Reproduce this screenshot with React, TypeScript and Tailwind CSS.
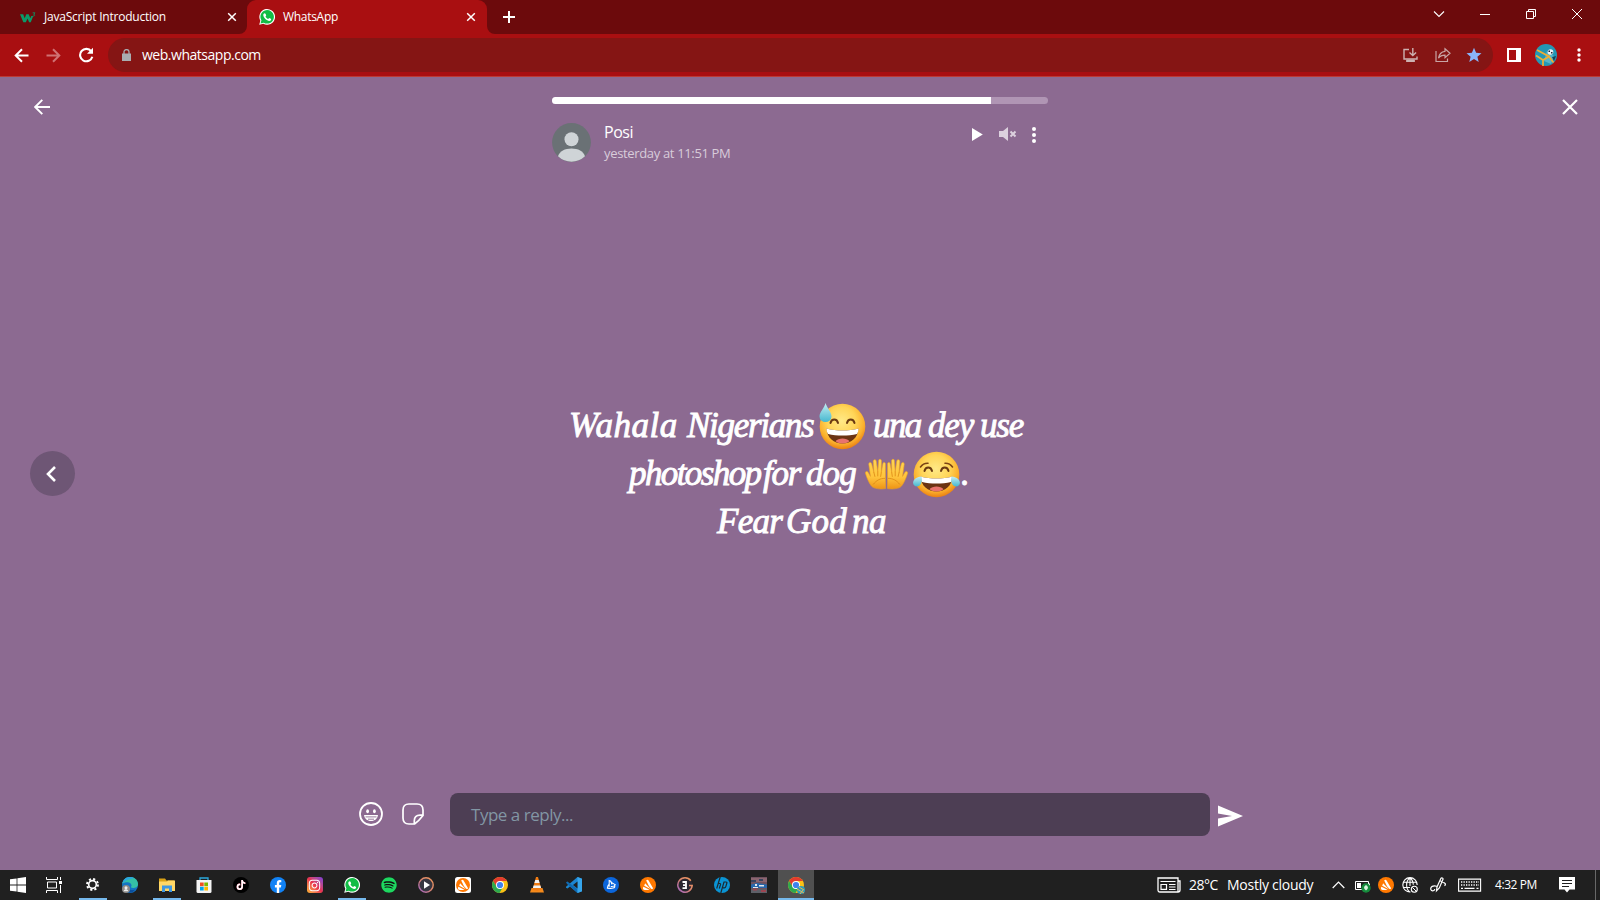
import React from "react";
import { FaInstagram, FaSpotify, FaTiktok } from "react-icons/fa";

type P = { children?: React.ReactNode; c?: string; v?: string };

function Svg({ children, c = "size-4", v = "0 0 16 16" }: P) {
  return (
    <svg viewBox={v} className={`block shrink-0 ${c}`} fill="none">
      {children}
    </svg>
  );
}

function WhatsBadge({ c = "size-4" }: P) {
  return (
    <Svg c={c} v="0 0 24 24">
      <path d="M.3 23.7 2 17.6A11.8 11.8 0 1 1 6.500 22.100Z" fill="#fff" />
      <path d="M2.300 21.700 3.600 17A10.100 10.100 0 1 1 7.200 20.500Z" fill="#12bd45" />
      <path
        d="M8.300 6.200c-.6 0-1.900 1.100-1.900 2.900 0 4 5.400 8.800 9 8.800 1.800 0 2.800-1.200 2.800-2.600 0-.5-2.300-1.700-2.900-1.700-.6 0-1 1.400-1.500 1.400-.9 0-4-2.700-4-3.700 0-.5 1-1 1-1.500 0-.7-.9-3.600-2.500-3.600Z"
        fill="#fff"
      />
    </Svg>
  );
}

function TabClose() {
  return (
    <Svg c="size-[10px]" v="0 0 10 10">
      <path d="M1.200 1.200 8.800 8.800M8.800 1.200 1.200 8.800" stroke="#fff" strokeWidth="1.500" />
    </Svg>
  );
}

function TabStrip() {
  return (
    <div className="flex h-[34px] bg-[#6c0a0c] text-[12px] text-white">
      <div className="flex h-[34px] w-[247px] items-center pl-5">
        <Svg c="h-4 w-4" v="0 0 16 16">
          <path d="M0 5.200h3.200l1.500 4 1.600-4h2.400l1.600 4 1-2.200h1.900l-2.400 6.300H9.100L7.500 9.500 5.900 13.300H3.300Z" fill="#0a9a68" />
          <path d="M12.600 3.800h2.400L13.700 5.300c1.600 0 1.400 2-.9 1.700" stroke="#0a9a68" strokeWidth=".8" />
        </Svg>
        <span className="ml-[8px] w-[183px] whitespace-nowrap tracking-[-0.220px]">JavaScript Introduction</span>
        <TabClose />
      </div>
      <div className="relative flex h-[34px] w-[240px] items-center rounded-t-[9px] bg-[#a90f11] pl-3">
        <Svg c="absolute -left-2 bottom-0 size-2" v="0 0 8 8">
          <path d="M8 0v8H0a8 8 0 0 0 8-8Z" fill="#a90f11" />
        </Svg>
        <Svg c="absolute -right-2 bottom-0 size-2" v="0 0 8 8">
          <path d="M0 0v8h8a8 8 0 0 1-8-8Z" fill="#a90f11" />
        </Svg>
        <WhatsBadge c="size-4" />
        <span className="ml-[8px] w-[183px] whitespace-nowrap tracking-[-0.300px]">WhatsApp</span>
        <TabClose />
      </div>
      <div className="ml-[16px] flex items-center">
        <Svg c="size-3" v="0 0 12 12">
          <path d="M6 0v12M0 6h12" stroke="#fff" strokeWidth="2" />
        </Svg>
      </div>
      <div className="ml-auto flex h-[28px] items-center pr-[18px]">
        <Svg c="h-3 w-3" v="0 0 12 12">
          <path d="M1 3.500 6 8.500l5-5" stroke="#fff" strokeWidth="1.100" />
        </Svg>
        <Svg c="ml-[35px] h-3 w-[10px]" v="0 0 10 12">
          <path d="M0 6.500h10" stroke="#fff" />
        </Svg>
        <Svg c="ml-[36px] size-[10px]" v="0 0 10 10">
          <path d="M.5 2.500h7v7h-7ZM2.500 2.500v-2h7v7h-2" stroke="#fff" />
        </Svg>
        <Svg c="ml-[36px] size-[10px]" v="0 0 10 10">
          <path d="m0 0 10 10M10 0 0 10" stroke="#fff" />
        </Svg>
      </div>
    </div>
  );
}

function Toolbar() {
  return (
    <div className="flex h-[43px] items-center border-b border-[#bb3b36] bg-[#a90f11] pl-[14px]">
      <Svg c="size-[15px]" v="0 0 15 15">
        <path d="M14.500 7.500H2M8 1.200 1.700 7.500 8 13.800" stroke="#fff" strokeWidth="2" />
      </Svg>
      <Svg c="ml-[17px] size-[15px]" v="0 0 15 15">
        <path d="M.5 7.500H13M7 1.200l6.300 6.300L7 13.800" stroke="#d07274" strokeWidth="2" />
      </Svg>
      <Svg c="ml-[17px] size-[16px]" v="0 0 16 16">
        <path d="M13.300 4.400A6.200 6.200 0 1 0 14.300 9.700" stroke="#fff" strokeWidth="2.100" />
        <path d="M15 .8v6H9Z" fill="#fff" />
      </Svg>
      <div className="ml-[14px] flex h-[34px] w-[1385px] items-center rounded-full bg-[#851514] pl-[14px]">
        <Svg c="-mt-px h-3 w-[9px]" v="0 0 9 12">
          <path d="M0 4.500h9V12H0Z" fill="#a9adb1" />
          <path d="M2 5V2.800a2.500 2.200 0 0 1 5 0V5" stroke="#a9adb1" strokeWidth="1.300" />
        </Svg>
        <span className="-mt-px ml-[11px] whitespace-nowrap text-[14px] tracking-[-0.480px] text-white">web.whatsapp.com</span>
        <div className="ml-auto flex items-center pr-[11px]">
          <Svg c="size-[15px]" v="0 0 15 15">
            <path d="M6 1.500H1v9.500h13v-2.500M9.800 0v6.500M6.500 4.500l3.300 3 3.300-3M3 13h9" stroke="#cdb1b0" strokeWidth="1.400" />
            <path d="M3.500 11.500h8V14h-8Z" fill="#cdb1b0" />
          </Svg>
          <Svg c="ml-[17px] size-[16px]" v="0 0 16 16">
            <path d="M1 4v10.500h11.500v-3" stroke="#c9a5a5" strokeWidth="1.200" />
            <path d="M10 1.800 15 6.200l-5 4.400V8.200c-3 0-5 .8-6.500 3C4 7.500 6.500 4.700 10 4.300Z" stroke="#c9a5a5" strokeWidth="1.200" />
          </Svg>
          <Svg c="ml-[15px] size-[16px]" v="0 0 16 16">
            <path d="m8 .8 2.100 5 5.400.4-4.100 3.500 1.300 5.300L8 12.100 3.300 15l1.300-5.300L.5 6.200l5.400-.4Z" fill="#8ab4f8" />
          </Svg>
        </div>
      </div>
      <Svg c="ml-[14px] size-[14px]" v="0 0 14 14">
        <path d="M0 0h14v14H0ZM2 2v10h7V2Z" fill="#fff" fillRule="evenodd" />
      </Svg>
      <Svg c="ml-[14px] size-[22px]" v="0 0 22 22">
        <circle cx="11" cy="11" r="11" fill="#2397b5" />
        <path d="M12 7 19 12l-3 8-7-3Z" fill="#57b5c9" />
        <path d="m17 13 4-1-2 5Z" fill="#17435a" />
        <path d="m2 6 12 6.500 4.500 6M8 22v-6l7-4M1 11.500l7 4.500" stroke="#f0ae34" strokeWidth="1.700" />
        <circle cx="15.500" cy="8" r="2.800" fill="#e9f1f4" />
        <path d="M13.500 6.500H15V8h-1.500ZM16 8h1.500v1.500H16Z" fill="#223" />
      </Svg>
      <Svg c="ml-[20px] h-[14px] w-1" v="0 0 4 14">
        <circle cx="2" cy="2" r="1.700" fill="#fff" />
        <circle cx="2" cy="7" r="1.700" fill="#fff" />
        <circle cx="2" cy="12" r="1.700" fill="#fff" />
      </Svg>
    </div>
  );
}

function Face({ tears }: { tears?: boolean }) {
  return (
    <Svg c="size-[47px]" v="0 0 47 47">
      <defs>
        <radialGradient id="face" cx=".48" cy=".38" r=".62">
          <stop offset="0" stopColor="#ffe987" />
          <stop offset=".5" stopColor="#ffd557" />
          <stop offset=".8" stopColor="#fbb02c" />
          <stop offset="1" stopColor="#ea7f12" />
        </radialGradient>
        <linearGradient id="drop" x1="0" y1="0" x2="0" y2="1">
          <stop offset="0" stopColor="#c4edf2" />
          <stop offset="1" stopColor="#45b8cf" />
        </linearGradient>
      </defs>
      <circle cx="23.500" cy="23.500" r="22.800" fill="url(#face)" />
      {tears ? (
        <path d="M7.500 16c2-2.800 4.500-4 7.500-3.800M39.500 16c-2-2.800-4.500-4-7.500-3.800" stroke="#7a4315" strokeWidth="1.600" strokeLinecap="round" />
      ) : null}
      <path d="M11.500 20c1-4.800 6.500-4.800 7.500 0M28 20c1-4.800 6.500-4.800 7.500 0" stroke="#6a3a12" strokeWidth="2" strokeLinecap="round" />
      <path d="M7.500 25.500c10 2.700 22 2.700 32 0C39 35 32 40.500 23.500 40.500S8 35 7.500 25.500Z" fill="#6b3413" />
      <path d="M7.500 25.500c10 2.700 22 2.700 32 0 0 2-.5 4-1.500 5.500-9 2-20 2-29 0-1-1.500-1.500-3.500-1.500-5.500Z" fill="#fff" />
      <path d="M16.500 38.200c3-3.500 11-3.500 14 0-4 3-10 3-14 0Z" fill="#e8736d" />
      {tears ? (
        <path
          d="M8.500 25.500c1.500 5-1 10-4.500 10-3 0-4.500-2.500-3.700-5C1.200 27.500 4.500 25.800 8.500 25.500ZM38.500 25.500c-1.500 5 1 10 4.500 10 3 0 4.500-2.500 3.700-5-.9-3-4.200-4.700-8.200-5Z"
          fill="url(#drop)"
        />
      ) : (
        <path d="M6.500 0c1.500 5 6 9 6 13.500A6 5.500 0 0 1 .5 13.500C.5 9 5.500 5 6.500 0Z" fill="url(#drop)" />
      )}
    </Svg>
  );
}

function HandShape() {
  return (
    <>
      <path
        d="M21.500 31.500c-6 1-12.500 0-14.500-2.500C4.500 26 2 20 .7 15.500c-.3-1.700 2-2.300 2.800-.8L6 19 4.200 6.500C4 4.500 6.600 4 7.200 6l2.300 9L8.800 3.300c0-2 2.700-2.200 3.100-.3l1.600 11.500L14.400 2.600c.2-1.900 2.800-1.700 2.900.2l-.2 12.400 1.700-9.400c.4-1.900 2.600-1.500 2.600.3Z"
        fill="url(#hand)"
        stroke="#eda01f"
        strokeWidth=".6"
      />
      <path d="M9.500 15l1 4M13.500 14.500v4M17.100 15.200l-.6 3.800M9 27c3-4 7-6 11.500-6" stroke="#d98512" strokeWidth=".8" strokeLinecap="round" />
    </>
  );
}

function Hands() {
  return (
    <Svg c="-ml-px h-[32px] w-[45px]" v="0 0 45 33">
      <defs>
        <linearGradient id="hand" x1="0" y1="0" x2="0" y2="1">
          <stop offset="0" stopColor="#ffd755" />
          <stop offset=".6" stopColor="#ffc43c" />
          <stop offset="1" stopColor="#ee9415" />
        </linearGradient>
      </defs>
      <HandShape />
      <g transform="translate(45 0) scale(-1 1)">
        <HandShape />
      </g>
    </Svg>
  );
}

function StatusText() {
  return (
    <div className="flex w-[462px] flex-col whitespace-nowrap font-['Liberation_Serif',serif] text-[35px] leading-[48px] text-white italic [-webkit-text-stroke:0.900px_white]">
      <div className="flex h-12 items-center">
        <span className="w-[118px] tracking-[0.500px]">Wahala</span>
        <span className="w-[132px] tracking-[-1.300px]">Nigerians</span>
        <span className="w-[54px]">
          <Face />
        </span>
        <span className="w-[55px] tracking-[-1.600px]">una</span>
        <span className="w-[52px] tracking-[-1.200px]">dey</span>
        <span className="w-[44px] tracking-[-1.200px]">use</span>
      </div>
      <div className="flex h-12 items-center pl-[60px]">
        <span className="w-[134px] tracking-[-1.600px]">photoshop</span>
        <span className="w-[43px] tracking-[-1.200px]">for</span>
        <span className="w-[59px] tracking-[-0.900px]">dog</span>
        <span className="w-[48px]">
          <Hands />
        </span>
        <Face tears />
        <span className="ml-px">.</span>
      </div>
      <div className="flex h-12 items-center pl-[148px]">
        <span className="w-[69px] tracking-[-0.700px]">Fear</span>
        <span className="w-[66px] tracking-[0.200px]">God</span>
        <span className="tracking-[-0.500px]">na</span>
      </div>
    </div>
  );
}

function StatusHeader() {
  return (
    <div className="w-[496px] pt-5">
      <div className="h-[7px] overflow-hidden rounded-full bg-[#b095b4]">
        <div className="h-full w-[439px] bg-white" />
      </div>
      <div className="mt-[18px] flex items-start">
        <Svg c="mt-px size-[39px]" v="0 0 39 39">
          <circle cx="19.500" cy="19.500" r="19.400" fill="#6a7175" />
          <circle cx="19.500" cy="16.200" r="7" fill="#cfd4d7" />
          <path d="M6 33.200c1.500-5 7-7.700 13.500-7.700S31.500 28.200 33 33.200a19.400 19.400 0 0 1-27 0Z" fill="#cfd4d7" />
        </Svg>
        <div className="ml-[13px] whitespace-nowrap">
          <div className="text-[16px] leading-[20px] tracking-[-0.500px] text-white">Posi</div>
          <div className="mt-[1px] text-[13px] leading-[20px] tracking-[-0.340px] text-[#d8ccda]">yesterday at 11:51 PM</div>
        </div>
        <div className="mt-px ml-auto flex h-[22px] items-center pr-[12px]">
          <Svg c="h-[13px] w-[11px]" v="0 0 11 13">
            <path d="M0 0v13l10.800-6.500Z" fill="#fff" />
          </Svg>
          <Svg c="ml-[16px] h-[14px] w-[18px]" v="0 0 18 14">
            <path d="M0 4h4l5-4v14l-5-4H0Z" fill="#dcd1de" />
            <path d="m11.500 4.500 5 5M16.500 4.500l-5 5" stroke="#dcd1de" strokeWidth="2" />
          </Svg>
          <Svg c="ml-[15px] mt-[2px] h-4 w-1" v="0 0 4 16">
            <circle cx="2" cy="2" r="2" fill="#fff" />
            <circle cx="2" cy="8" r="2" fill="#fff" />
            <circle cx="2" cy="14" r="2" fill="#fff" />
          </Svg>
        </div>
      </div>
    </div>
  );
}

function ReplyBar() {
  return (
    <div className="flex h-[43px] items-center pl-[359px]">
      <Svg c="-mt-px size-6" v="0 0 24 24">
        <circle cx="12" cy="12" r="11" stroke="#fff" strokeWidth="1.800" />
        <ellipse cx="8.600" cy="9.200" rx="1.400" ry="2" fill="#fff" />
        <ellipse cx="15.400" cy="9.200" rx="1.400" ry="2" fill="#fff" />
        <path d="M5 13h14c-.5 3.800-3.200 6-7 6s-6.500-2.200-7-6Z" fill="#fff" />
        <path d="M6.500 14.900h11M9 17.200h6" stroke="#8c6a91" strokeWidth=".9" />
      </Svg>
      <Svg c="-mt-px ml-[19px] size-[22px]" v="0 0 22 22">
        <path d="M7 1h8c4 0 6 2 6 6v5.500c-3 4-5 6-8.500 8.500H7c-4 0-6-2-6-6V7c0-4 2-6 6-6Z" stroke="#fff" strokeWidth="1.700" />
        <path d="M21 12.200h-3c-3.800 0-5.700 2-5.700 5.500V21" stroke="#fff" strokeWidth="1.700" />
      </Svg>
      <div className="ml-[26px] flex h-[43px] w-[760px] items-center rounded-[8px] bg-[#4d3e54] pl-[21px] text-[17px] tracking-[-0.480px] text-[#8296a4]">
        Type a reply...
      </div>
      <Svg c="mt-[2px] ml-[8px] h-[22px] w-[25px]" v="0 0 25 22">
        <path d="M0 .5 25 11 0 21.500v-8L14 11 0 8.500Z" fill="#fff" />
      </Svg>
    </div>
  );
}

function Status() {
  return (
    <div className="flex h-[793px] flex-col bg-[#8c6a91]">
      <div className="flex h-[102px] items-start justify-between pl-[34px] pr-[22px]">
        <Svg c="mt-[22px] size-4" v="0 0 16 16">
          <path d="M16 8H1.500M8.300 .8 1.200 8l7.100 7.200" stroke="#fff" strokeWidth="1.900" />
        </Svg>
        <div className="grow pl-[502px]">
          <StatusHeader />
        </div>
        <Svg c="mt-[22px] size-4" v="0 0 16 16">
          <path d="m1 1 14 14M15 1 1 15" stroke="#fff" strokeWidth="2.200" />
        </Svg>
      </div>
      <div className="flex h-[590px] items-center pl-[30px]">
        <div className="-mt-px flex size-[45px] items-center justify-center rounded-full bg-[#6e5675]">
          <Svg c="mr-[3px] mt-px h-4 w-[10px]" v="0 0 10 16">
            <path d="M9 1 2 8l7 7" stroke="#fff" strokeWidth="2.600" />
          </Svg>
        </div>
        <div className="ml-[494px]">
          <StatusText />
        </div>
      </div>
      <div className="mt-[24px]">
        <ReplyBar />
      </div>
    </div>
  );
}

function Chrome() {
  return (
    <Svg>
      <circle cx="8" cy="8" r="8" fill="#fbc116" />
      <path d="M8 4h6.900A8 8 0 0 0 1.100 4L4.500 9.500Z" fill="#e33b2e" />
      <path d="M1.100 4A8 8 0 0 0 7.500 16L11 10 8 8 4.500 9.500Z" fill="#2da94f" />
      <circle cx="8" cy="8" r="4" fill="#fff" />
      <circle cx="8" cy="8" r="3.100" fill="#3f82ee" />
    </Svg>
  );
}

function AvastMark() {
  return (
    <path
      d="M6.200 3.400c.5-1 1.700-1 2.200-.1l4.400 7.500c.5 1-.5 1.700-1.300 1.100L9 9.300ZM5.100 6.300l5.700 6-6.600-3.500ZM3.500 9.800l6 2.900c-2 .5-4.300.5-5.700 0-1-.5-1.100-1.800-.3-2.900Z"
      fill="#fff"
    />
  );
}

function Cell({ children, state = "idle" }: { children: React.ReactNode; state?: "idle" | "open" | "active" }) {
  return (
    <div className="flex h-[30px] w-[37px] shrink-0 flex-col items-center">
      <div className={`flex h-[28px] w-[36px] items-center justify-center pt-[2px] ${state === "active" ? "bg-[#505050]" : ""}`}>
        {children}
      </div>
      <div className={`h-[2px] ${state === "active" ? "w-[36px] bg-[#76b9ed]" : state === "open" ? "w-[28px] bg-[#76b9ed]" : "w-0"}`} />
    </div>
  );
}

function RingGradient() {
  return (
    <defs>
      <linearGradient id="ring" x1="1" y1="0" x2="0" y2="1">
        <stop offset="0" stopColor="#f19a5c" />
        <stop offset=".5" stopColor="#d9846f" />
        <stop offset="1" stopColor="#9c63c9" />
      </linearGradient>
    </defs>
  );
}

function Taskbar() {
  return (
    <div className="flex h-[30px] items-start bg-[#202020] text-white">
      <div className="flex h-[30px] w-[36px] items-center justify-center">
        <Svg>
          <path d="M0 2.300 6.600 1.400v6.200H0ZM7.400 1.300 16 0v7.600H7.400ZM0 8.400h6.600v6.200L0 13.700ZM7.400 8.400H16V16l-8.600-1.300Z" fill="#fff" />
        </Svg>
      </div>
      <div className="flex h-[30px] w-[38px] items-center pl-[10px]">
        <Svg>
          <path d="M.5 0v2.500h11V0M2 5h8.500v6H1.500V5ZM.5 16v-2.500h11V16M14.500 0v3M14.500 8v8" stroke="#fff" />
          <path d="M13 4h3v3h-3Z" fill="#fff" />
        </Svg>
      </div>
      <Cell state="open">
        <Svg c="-mt-px size-[13px]">
          <circle cx="8" cy="8" r="4.700" stroke="#fff" strokeWidth="2" />
          <circle cx="8" cy="8" r="6.700" stroke="#fff" strokeWidth="2.400" strokeDasharray="2.630 2.630" />
        </Svg>
      </Cell>
      <Cell>
        <Svg>
          <circle cx="8" cy="8" r="8" fill="#1474c4" />
          <path d="M.3 6.500C1.500 2 4.500 0 8 0c5 0 8 3.500 8 7 0 3-2.500 4-5 4-2 0-2.500-1-1.500-2C10 6 6 4.500 3 5.500Z" fill="#35c1a6" />
          <path d="M.3 6.500C1.500 2 4.500 0 8 0c2 0 3 .5 4 1.300C8 1.500 4 3 .3 6.500Z" fill="#2aa5e0" />
          <path d="M5 9c0 3 4 5 8 3.500C11 16 7 16.500 4 14.500Z" fill="#0b4f9e" />
          <circle cx="4" cy="12" r="4" fill="#8d8b89" />
          <circle cx="4" cy="10.800" r="1.500" fill="#eee" />
          <path d="M1.700 14.200c.5-2.500 4-2.500 4.600 0Z" fill="#eee" />
        </Svg>
      </Cell>
      <Cell state="open">
        <Svg>
          <path d="M0 1.500h6l1.500 2H15V8H0Z" fill="#d9a116" />
          <path d="M0 4.500h8l1-1h7V14H0Z" fill="#ffd766" />
          <path d="M3 15V8.500h10V15h-3v-3.500H6V15Z" fill="#3e97e2" />
        </Svg>
      </Cell>
      <Cell>
        <Svg>
          <path d="M4 4V1h8v3" stroke="#2aa8dc" strokeWidth="1.300" />
          <path d="M.5 3h15v11.500q0 1.500-1.500 1.500H2q-1.500 0-1.500-1.500Z" fill="#f4f4f4" />
          <path d="M4 5.500h3.700v3.700H4Z" fill="#f25022" />
          <path d="M8.300 5.500H12v3.700H8.300Z" fill="#7fba00" />
          <path d="M4 9.800h3.700v3.700H4Z" fill="#00a4ef" />
          <path d="M8.300 9.800H12v3.700H8.300Z" fill="#ffb900" />
        </Svg>
      </Cell>
      <Cell>
        <div className="flex size-4 items-center justify-center rounded-full bg-black">
          <FaTiktok size={10} className="text-white drop-shadow-[0.800px_0.300px_0_#fe2c55]" />
        </div>
      </Cell>
      <Cell>
        <Svg>
          <circle cx="8" cy="8" r="8" fill="#1182f5" />
          <path d="M6.800 16v-5.600H4.900V8h1.900V6.300c0-2.100 1.200-3.200 3-3.200l1.500.1v2h-.9c-1 0-1.200.5-1.200 1.200V8h2.100l-.4 2.400H9.200V16Z" fill="#fff" />
        </Svg>
      </Cell>
      <Cell>
        <div className="flex size-4 items-center justify-center rounded-[3px] bg-linear-to-tr from-[#fdb62f] via-[#e8304f] to-[#7a35dc]">
          <FaInstagram size={13} className="text-white" />
        </div>
      </Cell>
      <Cell state="open">
        <WhatsBadge />
      </Cell>
      <Cell>
        <div className="flex size-4 items-center justify-center rounded-full bg-[#101010]">
          <FaSpotify size={16} className="text-[#1ed760]" />
        </div>
      </Cell>
      <Cell>
        <Svg>
          <RingGradient />
          <circle cx="8" cy="8" r="7.200" fill="#363640" stroke="url(#ring)" strokeWidth="1.400" />
          <path d="M6 4.200v7.600L12 8Z" fill="#fff" />
        </Svg>
      </Cell>
      <Cell>
        <Svg>
          <rect width="16" height="16" rx="2.500" fill="#fff" />
          <circle cx="8" cy="8" r="7" fill="#ff7800" />
          <AvastMark />
        </Svg>
      </Cell>
      <Cell>
        <Chrome />
      </Cell>
      <Cell>
        <Svg>
          <path d="M2.500 11h11L15 15.500H1Z" fill="#f58a1b" />
          <path d="M7 0h2l3.500 12.500c-2 1.500-7 1.500-9 0Z" fill="#f07c13" />
          <path d="M6.300 3h3.400l.9 3H5.400ZM4.600 8.500h6.800l.7 2.500H3.900Z" fill="#f2f2f2" />
        </Svg>
      </Cell>
      <Cell>
        <Svg>
          <path d="M11.500 0 16 1.800v12.400L11.500 16 4 9.500 1.500 11.500 0 10.700v-1L8 3Z" fill="#1c86d1" />
          <path d="m0 5.300 1.500-.9 10 7.800V16L1 7Z" fill="#0f6bb3" />
          <path d="M11.500 0 16 1.800v12.400L11.500 16Z" fill="#36a6ec" />
          <path d="M11.500 4.500v7L7 8Z" fill="#202020" />
        </Svg>
      </Cell>
      <Cell>
        <Svg>
          <circle cx="8" cy="8" r="8" fill="#0b66dc" />
          <path
            d="M6.200 9.800V3.500c1.800.4 2.600 2 2.600 4M7.200 4.600l5.200 3.200c-1 1.500-2.400 2-4.600 1.700M11.600 8.500c1.200 2.600-2.600 3.300-7.200 2.600.2-1.600.7-2.800 1.800-3.900"
            stroke="#fff"
            strokeWidth="1.100"
          />
        </Svg>
      </Cell>
      <Cell>
        <Svg>
          <circle cx="8" cy="8" r="8" fill="#ff7800" />
          <AvastMark />
        </Svg>
      </Cell>
      <Cell>
        <Svg>
          <circle cx="8" cy="8" r="7.600" fill="#2b2730" />
          <path d="M13.800 3.700A7.200 7.200 0 1 0 15.200 8.500H12" stroke="url(#ring)" strokeWidth="1.500" />
          <path d="M5.500 5h3.500v6.200H5.500M6 8.100h3" stroke="#fff" strokeWidth="1.800" />
        </Svg>
      </Cell>
      <Cell>
        <Svg>
          <circle cx="8" cy="8" r="8" fill="#0a94d4" />
          <path d="M6.200 0 2.700 11.500M3.800 6.500h2q1 0 .7 1.200L5.300 11.500M6.800 16 10 5h2q1.200 0 .8 1.300l-1 3.300q-.3 1.200-1.500 1.200H9" stroke="#1d2830" strokeWidth="1.200" />
        </Svg>
      </Cell>
      <Cell>
        <Svg>
          <path d="M0 0h16v16H0Z" fill="#6f5260" />
          <path d="M0 1h16v4H0Z" fill="#8a6570" />
          <path d="M0 3h5v2H0ZM8 2h4v2H8Z" fill="#38445f" />
          <path d="M0 7.500 6 6l10 1.500V11H0Z" fill="#2767ac" />
          <path d="M4 7h2v2H4ZM8 8h5v1.500H8ZM2 10h5v1H2Z" fill="#e3e6ec" />
          <path d="M0 12h16v4H0Z" fill="#5d6068" />
          <path d="M2 12h4v1.500H2ZM10 13h5v2h-5Z" fill="#9c4551" />
        </Svg>
      </Cell>
      <Cell state="active">
        <div className="relative">
          <Chrome />
          <Svg c="absolute -right-px -bottom-px size-2" v="0 0 8 8">
            <circle cx="4" cy="4" r="4" fill="#2c9dba" />
            <path d="m0 3 7 4M2 1l5 3M3 8l3-4" stroke="#e8b454" strokeWidth="1" />
          </Svg>
        </div>
      </Cell>

      <div className="ml-auto flex h-[30px] items-center whitespace-nowrap">
        <Svg c="h-4 w-6" v="0 0 24 16">
          <path d="M1 1h20v14H3q-2 0-2-2ZM21 4h2v9q0 2-2 2" stroke="#fff" strokeWidth="1.300" />
          <path d="M3.500 4.500h15M12 7.500h6.500M12 10h6.500M12 12.500h6.500" stroke="#fff" strokeWidth="1.200" />
          <path d="M4 7.500h5.500v4.800H4Z" stroke="#fff" strokeWidth="1.200" />
        </Svg>
        <span className="-mt-px ml-2 w-[38px] text-[14px] tracking-[-0.500px]">28°C</span>
        <span className="-mt-px w-[105px] text-[14px] tracking-[-0.260px]">Mostly cloudy</span>
        <Svg c="h-3 w-[13px]" v="0 0 13 12">
          <path d="M.7 9 6.500 3l5.800 6" stroke="#fff" strokeWidth="1.200" />
        </Svg>
        <Svg c="ml-[10px] size-4">
          <path d="M.5 4.500h13v8H.5Z" stroke="#fff" />
          <path d="M2 6h4v5H2ZM14 6.500h1v4h-1Z" fill="#fff" />
          <circle cx="11" cy="11" r="4.700" fill="#168b3c" />
          <path d="M11 8q-4 2.500 0 5.500 4-3 0-5.500Z" fill="#d9f2dd" />
        </Svg>
        <Svg c="ml-[7px] size-4">
          <circle cx="8" cy="8" r="8" fill="#ff7800" />
          <AvastMark />
        </Svg>
        <Svg c="ml-[8px] size-4">
          <path d="M8.500 15A7.200 7.200 0 1 1 15.200 8M8 .8C3.500 4 3.500 12 8 15.200M8 .8c2.200 1.700 3.200 4.200 3.300 7M1.500 5.200h13M1.500 10.500H8M8 1v8" stroke="#fff" strokeWidth="1.100" />
          <circle cx="12.300" cy="12.300" r="3" stroke="#fff" strokeWidth="1.100" />
          <path d="m10.300 10.300 4 4" stroke="#fff" />
        </Svg>
        <Svg c="ml-[12px] size-4">
          <path
            d="M6.500 13.800 7 10l3.700-8.300c.8-1.500 2.800-.6 2.200.9L9.300 11ZM9.800 3.800l2.500 1M6.800 9.300C3 8 .3 9.800.8 12.300c.5 2.200 3.700 2.200 4-.3M12.500 5.500c2.800 0 3.700 2 2 3.300"
            stroke="#fff"
            strokeWidth="1.200"
          />
        </Svg>
        <Svg c="ml-[12px] h-[14px] w-6" v="0 0 24 14">
          <path d="M.6 1.100h22v12H.6Z" stroke="#fff" strokeWidth="1.100" />
          <path d="M3 4h18M3 7h18" stroke="#fff" strokeWidth="1.300" strokeDasharray="1.300 1.200" />
          <path d="M3 10.300h2M6.500 10.300h10M18.500 10.300h2" stroke="#fff" strokeWidth="1.200" />
        </Svg>
        <span className="ml-[13px] w-[64px] text-[12px] tracking-[-0.440px]">4:32 PM</span>
        <Svg c="size-4">
          <path d="M0 0h16v12.500h-5.500L8 15.500l-2.500-3H0Z" fill="#fff" />
          <path d="M3 3.500h10M3 6.500h10M3 9.500h7" stroke="#202020" strokeWidth="1.100" />
        </Svg>
        <div className="ml-[20px] mr-1 h-[30px] w-px bg-[#686868]" />
      </div>
    </div>
  );
}

export default function App() {
  return (
    <div className="h-[900px] w-[1600px] overflow-hidden font-['Open_Sans','Noto_Sans',sans-serif]">
      <TabStrip />
      <Toolbar />
      <Status />
      <Taskbar />
    </div>
  );
}
